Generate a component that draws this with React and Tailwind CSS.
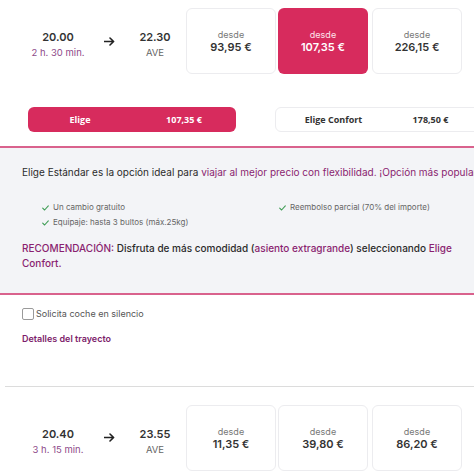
import React from "react";

const PINK = "bg-[#d72b5d]";

function Check() {
  return (
    <svg width="7" height="6" viewBox="0 0 7 6" className="shrink-0">
      <path d="M0.7 3.2 L2.6 5 L6.3 0.9" fill="none" stroke="#3f9d55" strokeWidth="1.1" strokeLinecap="round" strokeLinejoin="round" />
    </svg>
  );
}

function Arrow() {
  return (
    <svg width="11" height="9" viewBox="0 0 11 9">
      <path d="M0.5 4.5 H9.5 M6 1 L9.6 4.5 L6 8" fill="none" stroke="#222" strokeWidth="1.6" strokeLinecap="round" strokeLinejoin="round" />
    </svg>
  );
}

function PriceCard({ price, selected }) {
  return (
    <div
      className={
        "w-[90px] h-[66px] rounded-[6px] flex flex-col items-center justify-center pt-[1px] " +
        (selected ? "bg-[#d72b5d] text-white" : "bg-white border border-[#ececef]")
      }
    >
      <div className={"text-[9px] leading-[12px] " + (selected ? "text-[#fde4ec]" : "text-[#777]")}>desde</div>
      <div className={"text-[11px] leading-[13px] font-semibold " + (selected ? "text-white" : "text-[#333]")}>{price}</div>
    </div>
  );
}

function TripRow({ dep, dur, arr, prices, selectedIndex }) {
  return (
    <div className="flex items-center pl-[28px]">
      <div className="w-[60px] flex flex-col items-center pt-[8px]">
        <div className="text-[11px] leading-[15px] font-semibold text-[#333]">{dep}</div>
        <div className="text-[9.5px] leading-[15px] text-[#8e4a8a]">{dur}</div>
      </div>
      <div className="w-[42px] flex justify-center">
        <Arrow />
      </div>
      <div className="w-[50px] flex flex-col items-center pt-[8px]">
        <div className="text-[11px] leading-[15px] font-semibold text-[#333]">{arr}</div>
        <div className="text-[9.5px] leading-[15px] text-[#666]">AVE</div>
      </div>
      <div className="flex ml-[6px]">
        <PriceCard price={prices[0]} selected={selectedIndex === 0} />
        <div className="ml-[2px]">
          <PriceCard price={prices[1]} selected={selectedIndex === 1} />
        </div>
        <div className="ml-[4px]">
          <PriceCard price={prices[2]} selected={selectedIndex === 2} />
        </div>
      </div>
    </div>
  );
}

export default function App() {
  return (
    <div
      className="w-[474px] h-[474px] overflow-hidden bg-white"
      style={{ fontFamily: "Inter, 'Noto Sans', sans-serif" }}
    >
      <div className="pt-[8px]">
        <TripRow dep="20.00" dur="2 h. 30 min." arr="22.30" prices={["93,95 €", "107,35 €", "226,15 €"]} selectedIndex={1} />
      </div>

      <div
        className="flex pl-[28px] mt-[33px] w-[520px]"
        style={{ fontFamily: "'Open Sans', sans-serif" }}
      >
        <div className={"w-[208px] h-[25px] rounded-[6px] flex items-center shrink-0 " + PINK}>
          <div className="w-1/2 text-center text-[9px] font-bold text-white">Elige</div>
          <div className="w-1/2 text-center text-[9px] font-bold text-white">107,35 €</div>
        </div>
        <div className="ml-[39px] w-[208px] h-[25px] rounded-[6px] flex items-center shrink-0 border border-[#ececef]">
          <div className="w-1/2 text-center text-[9px] font-bold text-[#333] pl-[12px]">Elige Confort</div>
          <div className="w-1/2 text-center text-[9px] font-bold text-[#333]">178,50 €</div>
        </div>
      </div>

      <div className="mt-[14px] border-t-2 border-b-2 border-[#d9628d] bg-[#f3f4f7] pl-[22px] pt-[17px] pb-[22px]">
        <div className="whitespace-nowrap text-[10px] leading-[14px] text-[#2b2b2b]">
          Elige Estándar es la opción ideal para{" "}
          <span className="text-[#8a1f70]">viajar al mejor precio con flexibilidad. ¡Opción más popular</span>
        </div>
        <div className="grid grid-cols-[237px_1fr] pl-[20px] mt-[21px] text-[8px] leading-[15px] text-[#666]">
          <div className="flex items-center gap-[4px]">
            <Check />
            <span>Un cambio gratuito</span>
          </div>
          <div className="flex items-center gap-[4px]">
            <Check />
            <span>Reembolso parcial (70% del importe)</span>
          </div>
          <div className="flex items-center gap-[4px]">
            <Check />
            <span>Equipaje: hasta 3 bultos (máx.25kg)</span>
          </div>
        </div>
        <div className="mt-[11px] w-[440px] text-[10px] leading-[15px] font-medium text-[#2b2b2b]">
          <span className="text-[#8a1f70]">RECOMENDACIÓN:</span> Disfruta de más comodidad (
          <span className="text-[#8a1f70]">asiento extragrande</span>) seleccionando{" "}
          <span className="text-[#8a1f70]">Elige Confort.</span>
        </div>
      </div>

      <div className="pl-[22px] mt-[12px]">
        <label className="flex items-center gap-[2px]">
          <span className="w-[12px] h-[12px] rounded-[2px] border border-[#9a9a9a] bg-white" />
          <span className="text-[9px] text-[#555]">Solicita coche en silencio</span>
        </label>
        <div className="mt-[12px] text-[9px] leading-[12px] font-semibold text-[#7d1d6b]">Detalles del trayecto</div>
      </div>

      <div className="ml-[5px] mt-[41px] border-t border-[#dcdcdc]" />

      <div className="pt-[18px]">
        <TripRow dep="20.40" dur="3 h. 15 min." arr="23.55" prices={["11,35 €", "39,80 €", "86,20 €"]} selectedIndex={-1} />
      </div>
    </div>
  );
}
